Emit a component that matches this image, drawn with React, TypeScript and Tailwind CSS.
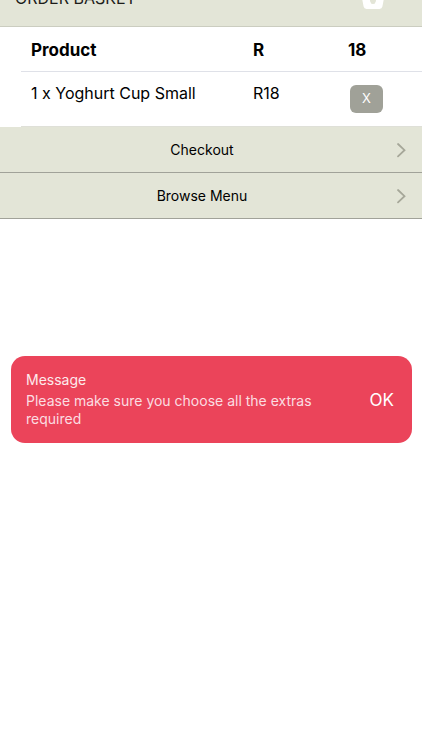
import React from "react";

type Item = { name: string; price: string };

const items: Item[] = [{ name: "1 x Yoghurt Cup Small", price: "R18" }];
const actions = ["Checkout", "Browse Menu"];

function BasketIcon() {
  return (
    <svg className="h-6 w-6 shrink-0" viewBox="0 0 24 24" fill="none" aria-hidden="true">
      <path
        fill="#ffffff"
        fillRule="evenodd"
        d="M0 8h6l5-7h2l5 7h6l-2.6 13.6Q20.900 24 18.500 24H5.500Q3.100 24 2.600 21.600ZM12 12.500a3 3 0 0 0-2.200 5v.5q.2 1 2.200 1t2.200-1v-.5A3 3 0 0 0 12 12.500Z"
      />
    </svg>
  );
}

function Chevron() {
  return (
    <svg
      className="h-4 w-3 shrink-0"
      viewBox="0 0 12 16"
      fill="none"
      stroke="#a6a799"
      strokeWidth="1.8"
      aria-hidden="true"
    >
      <path d="M3 2l6.500 6.200-6.500 6.200" strokeLinecap="round" />
    </svg>
  );
}

export default function App() {
  return (
    <div className="min-h-screen bg-white font-['Inter','Liberation_Sans',sans-serif] text-black">
      <header className="flex h-[27px] items-end justify-between overflow-hidden border-b border-[#cbcdc0] bg-[#e3e5d7] pr-[37px] pl-[15px]">
        <h1 className="pb-[18px] text-base leading-5 text-[#1c1c1a]">ORDER BASKET</h1>
        <div className="pb-[17px]">
          <BasketIcon />
        </div>
      </header>

      <main>
        <div className="pl-[21px]">
          <table className="w-full table-fixed border-separate border-spacing-0 text-left">
            <colgroup>
              <col />
              <col className="w-[95px]" />
              <col className="w-[84px]" />
            </colgroup>
            <thead>
              <tr className="h-[45px] text-[17px] font-bold">
                <th scope="col" className="border-b border-[#dfe1e8] pt-[3px] pl-[10px]">Product</th>
                <th scope="col" className="border-b border-[#dfe1e8] pt-[3px] pl-[10px]">R</th>
                <th scope="col" className="border-b border-[#dfe1e8] pt-[3px] pl-[10px]">18</th>
              </tr>
            </thead>
            <tbody>
              {items.map((item) => (
                <tr key={item.name} className="h-[55px] align-top text-base">
                  <td className="border-b border-[#dfe0d8] pt-[9px] pl-[10px]">{item.name}</td>
                  <td className="border-b border-[#dfe0d8] pt-[9px] pl-[10px]">{item.price}</td>
                  <td className="border-b border-[#dfe0d8] pt-[13px] pl-3">
                    <button
                      type="button"
                      className="block h-7 w-[33px] rounded-md bg-[#a0a198] text-[13px] text-white"
                    >
                      X
                    </button>
                  </td>
                </tr>
              ))}
            </tbody>
          </table>
        </div>

        <nav>
          {actions.map((label) => (
            <button
              key={label}
              type="button"
              className="flex h-[46px] w-full items-center border-b border-[#a1a299] bg-[#e3e5d7] pr-[15px] text-sm"
            >
              <span className="flex-1 pl-[9px] text-center">{label}</span>
              <Chevron />
            </button>
          ))}
        </nav>
      </main>

      <div
        role="alert"
        className="fixed right-[10px] left-[11px] top-[356px] flex items-center justify-between rounded-[14px] bg-[#eb445a] py-[15px] pr-[18px] pl-[15px] text-white"
      >
        <div className="w-[300px] text-sm">
          <p className="mb-[2px] leading-[18px] text-[#fdeaec]">Message</p>
          <p className="pt-px leading-[18px] text-[#fbdde1]">
            Please make sure you choose all the extras required
          </p>
        </div>
        <button type="button" className="text-[17px] leading-6">
          OK
        </button>
      </div>
    </div>
  );
}
